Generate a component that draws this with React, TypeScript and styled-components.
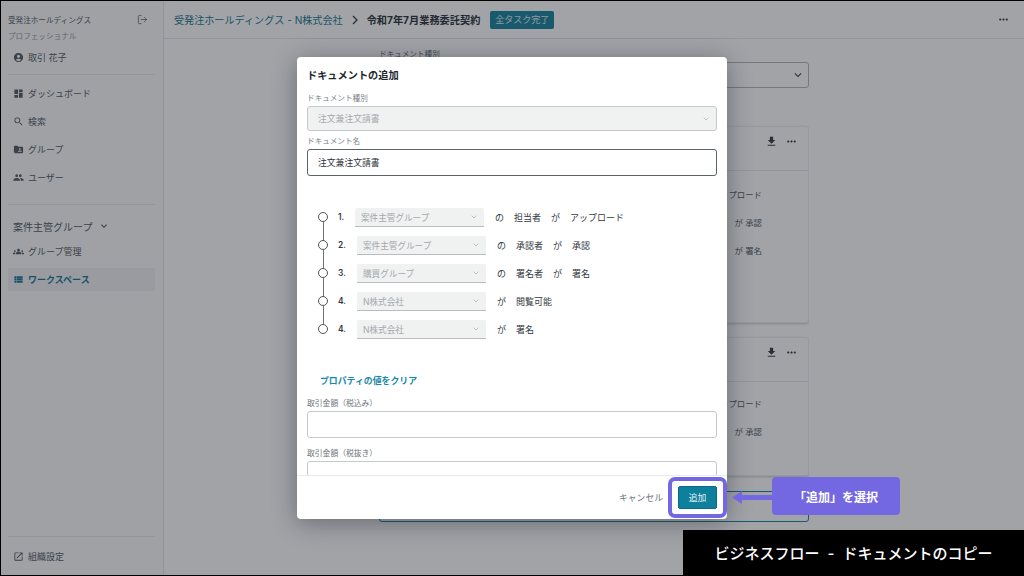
import React from "react";
import styled, { createGlobalStyle } from "styled-components";
import {
  MdAccountCircle, MdDashboard, MdSearch, MdFolderShared, MdPeople, MdGroups,
  MdViewList, MdOpenInNew, MdFileDownload, MdMoreHoriz, MdKeyboardArrowDown,
} from "react-icons/md";
import { LogOut, ChevronDown } from "lucide-react";

const Global = createGlobalStyle`
  html, body { margin: 0; padding: 0; background: #000; width: 1024px; height: 576px; overflow: hidden; }
  * { box-sizing: border-box; }
  body { font-family: Inter, "Noto Sans CJK JP", sans-serif; color: #2b3138; }
`;

const Frame = styled.div`
  position: relative; width: 1024px; height: 576px; padding: 1px 0 1px 1px; background: #000; overflow: hidden;
`;
const Page = styled.div`
  display: flex; width: 100%; height: 100%; background: #fff;
`;
const Sidebar = styled.aside`
  width: 163px; flex: none; display: flex; flex-direction: column; padding: 0 8px 0 7px;
  border-right: 1px solid #e3e5e8; background: #fbfbfb;
`;
const OrgRow = styled.div`
  display: flex; align-items: center; justify-content: space-between; height: 14px; margin-top: 11px; padding-right: 7px;
  font-size: 7.6px; color: #4a5158;
`;
const Plan = styled.div`
  font-size: 7.6px; color: #8f959b; margin-top: 4px; margin-bottom: 1px; height: 14px; line-height: 14px;
`;
const Divider = styled.div<{ $top?: number; $bottom?: number }>`
  height: 1px; flex: none; background: #e6e8ea; margin: ${p => p.$top ?? 0}px 0 ${p => p.$bottom ?? 0}px;
`;
const NavItem = styled.div<{ $active?: boolean; $h?: number; $mt?: number }>`
  display: flex; align-items: center; gap: 4px; flex: none; height: ${p => p.$h ?? 28}px; margin-top: ${p => p.$mt ?? 0}px; padding-left: 5px;
  font-size: 9px; color: ${p => (p.$active ? "#0c6f8c" : "#4a5158")}; font-weight: ${p => (p.$active ? 700 : 400)};
  border-radius: 2px; background: ${p => (p.$active ? "#f0f1f3" : "transparent")};
  svg { flex: none; }
`;
const GroupTitle = styled.div`
  display: flex; align-items: center; gap: 6px; height: 20px; padding-left: 5px; margin-top: 11px; font-size: 10px; color: #4a5158;
`;
const Spacer = styled.div`flex: 1;`;
const Main = styled.main`
  flex: 1; display: flex; flex-direction: column; min-width: 0;
`;
const Header = styled.header`
  height: 38px; flex: none; display: flex; align-items: center; padding: 0 14px 0 10px;
  border-bottom: 1px solid #e3e5e8; font-size: 10.1px;
`;
const Crumb = styled.span`color: #0c6f8c;`;
const Sep = styled.span`margin: 0 8px; display: flex; color: #2b3138;`;
const Title = styled.span`font-weight: 700; color: #22272d; font-size: 10.2px;`;
const Badge = styled.span`
  margin-left: 10px; height: 18px; padding: 0 5px; display: flex; align-items: center; border-radius: 2px;
  background: #0e7c99; color: #dfeef2; font-size: 9px;
`;
const Content = styled.div`
  width: 430px; margin: 0 auto; display: flex; flex-direction: column; flex: 1; overflow: hidden;
`;
const SmallLabel = styled.div`
  font-size: 7.6px; color: #5c636a; height: 11px; line-height: 11px; margin-top: 10px; margin-bottom: 2px;
`;
const BgSelect = styled.div`
  height: 26px; flex: none; border: 1px solid #aeb2b6; border-radius: 3px; display: flex; align-items: center;
  justify-content: flex-end; padding-right: 3px; background: #fff;
`;
const Card = styled.section<{ $h: number; $mt: number; $teal?: boolean }>`
  flex: none; height: ${p => p.$h}px; margin-top: ${p => p.$mt}px; border-radius: 3px; background: #fff;
  border: 1px solid ${p => (p.$teal ? "#0e7c99" : "#eceef0")};
  box-shadow: ${p => (p.$teal ? "none" : "0 1px 3px rgba(0,0,0,.22)")};
`;
const CardHead = styled.div`
  height: 44px; border-bottom: 1px solid #e3e5e8; display: flex; align-items: center; justify-content: flex-end;
  gap: 7px; padding: 0 10px 14px 0; color: #2b3138;
`;
const CardBody = styled.div<{ $pt: number }>`
  display: flex; flex-direction: column; align-items: flex-end; padding: ${p => p.$pt}px 46px 0 0; font-size: 8.4px; color: #4a5158;
`;
const CardLine = styled.div`height: 28px; line-height: 15px;`;

const Overlay = styled.div`
  position: absolute; inset: 1px 0 1px 1px; background: rgba(40,46,54,.44);
`;
const Modal = styled.div`
  position: absolute; left: 296px; top: 56px; width: 430px; height: 462px; display: flex; flex-direction: column;
  background: #fff; border-radius: 4px; box-shadow: 0 4px 24px rgba(20,25,32,.4);
`;
const ModalBody = styled.div`
  flex: 1; min-height: 0; overflow: hidden; padding: 11px 10px 0 10px;
`;
const ModalTitle = styled.h2`
  margin: 0 0 10px; font-size: 10.2px; line-height: 15px; font-weight: 700; color: #22272d;
`;
const FieldLabel = styled.div`
  font-size: 7.6px; line-height: 11px; height: 11px; margin-bottom: 2px; color: #7b8187;
`;
const FieldSelect = styled.div`
  height: 25px; margin-bottom: 5px; background: #f0f1f1; border: 1px solid #c6c9cc; border-radius: 3px;
  display: flex; align-items: center; justify-content: space-between; padding: 0 6px 0 10px;
  font-size: 8.8px; color: #a5a9ad;
`;
const FieldInput = styled.div<{ $h?: number; $strong?: boolean }>`
  height: ${p => p.$h ?? 27}px; flex: none; border: 1px solid ${p => (p.$strong ? "#5c6269" : "#c6c9cc")}; border-radius: 3px;
  display: flex; align-items: center; padding: 0 10px; font-size: 8.8px; color: #2b3138; background: #fff;
`;
const Steps = styled.div`
  position: relative; display: flex; flex-direction: column; margin-top: 27px;
`;
const Step = styled.div`
  position: relative; display: flex; align-items: center; height: 28px; padding-left: 11px; font-size: 9px; color: #33393f;
  &::after { content: ""; position: absolute; left: 15.5px; top: 14px; height: 28px; width: 1px; background: #6f757b; }
  &:last-child::after { display: none; }
`;
const Dot = styled.span`
  width: 10px; height: 10px; border-radius: 50%; border: 1.2px solid #4f555b; background: #fff; flex: none; position: relative; z-index: 1;
`;
const Num = styled.span<{ $w: number }>`
  width: ${p => p.$w}px; padding-left: 10px; flex: none; font-weight: 600; font-size: 8.4px; color: #33393f;
`;
const MiniSelect = styled.div`
  width: 129px; height: 19px; flex: none; background: #f0f1f1; border-radius: 2px 2px 0 0; border-bottom: 1px solid #b9bdc1;
  display: flex; align-items: center; justify-content: space-between; padding: 0 6px; font-size: 8.6px; color: #a5a9ad;
`;
const Words = styled.div`
  display: flex; gap: 10px; margin-left: 11px; white-space: nowrap;
`;
const ClearLink = styled.div`
  margin: 31px 0 0 13px; font-size: 8.9px; font-weight: 700; line-height: 14px; color: #1689a6;
`;
const PropLabel = styled(FieldLabel)<{ $mt: number }>`
  margin-top: ${p => p.$mt}px; margin-bottom: 2px; color: #6c7278; font-size: 7.8px;
`;
const ModalFooter = styled.div`
  flex: none; height: 44px; border-top: 1px solid #e8eaec; display: flex; align-items: center; justify-content: flex-end;
  padding: 0 10px 0 0; gap: 15px;
`;
const Cancel = styled.span`font-size: 8.8px; color: #6c7278;`;
const AddButton = styled.button`
  width: 39px; height: 23px; padding: 0; border: 1px solid #0a6b85; border-radius: 2px; background: #0e7f9c; color: #e6f3f6;
  font: 400 8.8px Inter, "Noto Sans CJK JP", sans-serif;
`;
const Highlight = styled.div`
  position: absolute; left: 667px; top: 476px; width: 59px; height: 41px; border: 4px solid #7368e2; border-radius: 7px;
`;
const Arrow = styled.svg`
  position: absolute; left: 731px; top: 489px;
`;
const Callout = styled.div`
  position: absolute; left: 771px; top: 476px; width: 128px; height: 38px; border-radius: 4px; background: #7368e2;
  display: flex; align-items: center; justify-content: center; color: #fff; font-size: 12px; font-weight: 700;
`;
const Caption = styled.div`
  position: absolute; right: 0; bottom: 1px; width: 341px; height: 45px; background: #000; color: #fff;
  display: flex; align-items: center; justify-content: center; font-size: 15px; font-weight: 500; white-space: pre;
`;

const steps = [
  { n: "1.", group: "案件主管グループ", words: ["の", "担当者", "が", "アップロード"], w: 27 },
  { n: "2.", group: "案件主管グループ", words: ["の", "承認者", "が", "承認"], w: 29 },
  { n: "3.", group: "購買グループ", words: ["の", "署名者", "が", "署名"], w: 29 },
  { n: "4.", group: "N株式会社", words: ["が", "閲覧可能"], w: 29 },
  { n: "4.", group: "N株式会社", words: ["が", "署名"], w: 29 },
];

export default function App() {
  return (
    <Frame>
      <Global />
      <Page>
        <Sidebar>
          <OrgRow>受発注ホールディングス<LogOut size={11} strokeWidth={1.6} /></OrgRow>
          <Plan>プロフェッショナル</Plan>
          <NavItem $h={24}><MdAccountCircle size={11} />取引 花子</NavItem>
          <Divider $top={5} $bottom={4} />
          <NavItem><MdDashboard size={11} />ダッシュボード</NavItem>
          <NavItem><MdSearch size={11} />検索</NavItem>
          <NavItem><MdFolderShared size={11} />グループ</NavItem>
          <NavItem><MdPeople size={11} />ユーザー</NavItem>
          <Divider $top={13} />
          <GroupTitle>案件主管グループ<MdKeyboardArrowDown size={12} /></GroupTitle>
          <NavItem $h={24} $mt={3}><MdGroups size={11} />グループ管理</NavItem>
          <NavItem $active $h={23} $mt={5}><MdViewList size={11} color="#0c6f8c" />ワークスペース</NavItem>
          <Spacer />
          <Divider />
          <NavItem $h={38}><MdOpenInNew size={11} />組織設定</NavItem>
        </Sidebar>
        <Main>
          <Header>
            <Crumb>受発注ホールディングス - N株式会社</Crumb>
            <Sep><svg width="8" height="10" viewBox="0 0 8 10"><path d="M2 1l4 4-4 4" fill="none" stroke="currentColor" strokeWidth="1.3" /></svg></Sep>
            <Title>令和7年7月業務委託契約</Title>
            <Badge>全タスク完了</Badge>
            <Spacer />
            <MdMoreHoriz size={13} />
          </Header>
          <Content>
            <SmallLabel>ドキュメント種別</SmallLabel>
            <BgSelect><MdKeyboardArrowDown size={14} /></BgSelect>
            <Card $h={197} $mt={38}>
              <CardHead><MdFileDownload size={13} /><MdMoreHoriz size={13} /></CardHead>
              <CardBody $pt={17}>
                <CardLine>アップロード</CardLine>
                <CardLine>が 承認</CardLine>
                <CardLine>が 署名</CardLine>
              </CardBody>
            </Card>
            <Card $h={139} $mt={14}>
              <CardHead><MdFileDownload size={13} /><MdMoreHoriz size={13} /></CardHead>
              <CardBody $pt={15}>
                <CardLine>アップロード</CardLine>
                <CardLine>が 承認</CardLine>
              </CardBody>
            </Card>
            <Card $h={31} $mt={15} $teal />
          </Content>
        </Main>
      </Page>
      <Overlay>
        <Modal>
          <ModalBody>
            <ModalTitle>ドキュメントの追加</ModalTitle>
            <FieldLabel>ドキュメント種別</FieldLabel>
            <FieldSelect>注文兼注文請書<ChevronDown size={8} /></FieldSelect>
            <FieldLabel>ドキュメント名</FieldLabel>
            <FieldInput $strong>注文兼注文請書</FieldInput>
            <Steps>
              {steps.map((s, i) => (
                <Step key={i}>
                  <Dot />
                  <Num $w={s.w}>{s.n}</Num>
                  <MiniSelect>{s.group}<ChevronDown size={8} /></MiniSelect>
                  <Words>{s.words.map((w, j) => <span key={j}>{w}</span>)}</Words>
                </Step>
              ))}
            </Steps>
            <ClearLink>プロパティの値をクリア</ClearLink>
            <PropLabel $mt={10}>取引金額（税込み）</PropLabel>
            <FieldInput>{""}</FieldInput>
            <PropLabel $mt={10}>取引金額（税抜き）</PropLabel>
            <FieldInput>{""}</FieldInput>
          </ModalBody>
          <ModalFooter>
            <Cancel>キャンセル</Cancel>
            <AddButton>追加</AddButton>
          </ModalFooter>
        </Modal>
        <Highlight />
        <Arrow width="41" height="15" viewBox="0 0 41 15"><path d="M0 7.5L10 1v4h31v5H10v4z" fill="#7368e2" /></Arrow>
        <Callout>「追加」を選択</Callout>
      </Overlay>
      <Caption>{"ビジネスフロー  -  ドキュメントのコピー"}</Caption>
    </Frame>
  );
}
